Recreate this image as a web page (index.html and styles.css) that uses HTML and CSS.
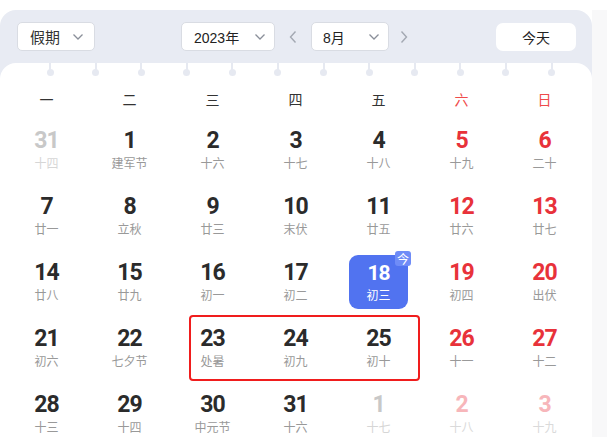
FILE: index.html
```html
<!DOCTYPE html>
<html lang="zh">
<head>
<meta charset="utf-8">
<link rel="stylesheet" href="styles.css">
</head>
<body>
<div class="shell">
  <div class="page">
    <div class="toolbar">
      <div class="select sel-holiday"><span>假期</span><svg class="caret" viewBox="0 0 12 8"><path d="M1.5 1.5 L6 6 L10.5 1.5"/></svg></div>
      <div class="center-group">
        <div class="select sel-year"><span>2023年</span><svg class="caret" viewBox="0 0 12 8"><path d="M1.5 1.5 L6 6 L10.5 1.5"/></svg></div>
        <div class="arrow arrow-prev"><svg viewBox="0 0 8 14"><path d="M6.5 1.5 L1.5 7 L6.5 12.5"/></svg></div>
        <div class="select sel-month"><span>8月</span><svg class="caret" viewBox="0 0 12 8"><path d="M1.5 1.5 L6 6 L10.5 1.5"/></svg></div>
        <div class="arrow arrow-next"><svg viewBox="0 0 8 14"><path d="M1.5 1.5 L6.5 7 L1.5 12.5"/></svg></div>
      </div>
      <div class="today-btn">今天</div>
    </div>
    <div class="card">
      <div class="rings">
        <i></i><i></i><i></i><i></i><i></i><i></i><i></i><i></i><i></i><i></i><i></i><i></i>
      </div>
      <div class="weekdays">
        <div>一</div><div>二</div><div>三</div><div>四</div><div>五</div><div class="wk-red">六</div><div class="wk-red">日</div>
      </div>
      <div class="grid">
        <div class="cell other"><div class="day"><b>31</b><span>十四</span></div></div>
        <div class="cell"><div class="day"><b>1</b><span>建军节</span></div></div>
        <div class="cell"><div class="day"><b>2</b><span>十六</span></div></div>
        <div class="cell"><div class="day"><b>3</b><span>十七</span></div></div>
        <div class="cell"><div class="day"><b>4</b><span>十八</span></div></div>
        <div class="cell red"><div class="day"><b>5</b><span>十九</span></div></div>
        <div class="cell red"><div class="day"><b>6</b><span>二十</span></div></div>

        <div class="cell"><div class="day"><b>7</b><span>廿一</span></div></div>
        <div class="cell"><div class="day"><b>8</b><span>立秋</span></div></div>
        <div class="cell"><div class="day"><b>9</b><span>廿三</span></div></div>
        <div class="cell"><div class="day"><b>10</b><span>末伏</span></div></div>
        <div class="cell"><div class="day"><b>11</b><span>廿五</span></div></div>
        <div class="cell red"><div class="day"><b>12</b><span>廿六</span></div></div>
        <div class="cell red"><div class="day"><b>13</b><span>廿七</span></div></div>

        <div class="cell"><div class="day"><b>14</b><span>廿八</span></div></div>
        <div class="cell"><div class="day"><b>15</b><span>廿九</span></div></div>
        <div class="cell"><div class="day"><b>16</b><span>初一</span></div></div>
        <div class="cell"><div class="day"><b>17</b><span>初二</span></div></div>
        <div class="cell today"><div class="day"><b>18</b><span>初三</span><em class="badge">今</em></div></div>
        <div class="cell red"><div class="day"><b>19</b><span>初四</span></div></div>
        <div class="cell red"><div class="day"><b>20</b><span>出伏</span></div></div>

        <div class="cell"><div class="day"><b>21</b><span>初六</span></div></div>
        <div class="cell"><div class="day"><b>22</b><span>七夕节</span></div></div>
        <div class="cell"><div class="day"><b>23</b><span>处暑</span></div></div>
        <div class="cell"><div class="day"><b>24</b><span>初九</span></div></div>
        <div class="cell"><div class="day"><b>25</b><span>初十</span></div></div>
        <div class="cell red"><div class="day"><b>26</b><span>十一</span></div></div>
        <div class="cell red"><div class="day"><b>27</b><span>十二</span></div></div>

        <div class="cell"><div class="day"><b>28</b><span>十三</span></div></div>
        <div class="cell"><div class="day"><b>29</b><span>十四</span></div></div>
        <div class="cell"><div class="day"><b>30</b><span>中元节</span></div></div>
        <div class="cell"><div class="day"><b>31</b><span>十六</span></div></div>
        <div class="cell other"><div class="day"><b>1</b><span>十七</span></div></div>
        <div class="cell other-red"><div class="day"><b>2</b><span>十八</span></div></div>
        <div class="cell other-red"><div class="day"><b>3</b><span>十九</span></div></div>
      </div>
      <div class="highlight"></div>
    </div>
  </div>
  <div class="gutter"></div>
</div>
</body>
</html>
```

FILE: styles.css
```css
* { box-sizing: border-box; }
html, body { margin: 0; padding: 0; background: #ffffff; }
body {
  font-family: "Liberation Sans", "Noto Sans CJK SC", sans-serif;
  color: #333;
  height: 437px;
  overflow: hidden;
}
.shell {
  display: flex;
  height: 437px;
}
.page {
  width: 592px;
  flex: none;
  margin-top: 10px;
  background: #e8ebf3;
  border-radius: 16px 16px 0 0;
  display: flex;
  flex-direction: column;
}
.gutter {
  flex: 1;
  background: #f8f8f9;
  margin-top: 10px;
}
.toolbar {
  flex: none;
  height: 53px;
  display: flex;
  align-items: center;
  padding: 0 16px 0 17px;
}
.select {
  height: 29px;
  background: #fff;
  border: 1px solid #d9dce3;
  border-radius: 5px;
  display: flex;
  align-items: center;
  justify-content: space-between;
  font-size: 14px;
  color: #222;
}
.caret {
  width: 12px;
  height: 8px;
  fill: none;
  stroke: #8a8f99;
  stroke-width: 1.3;
}
.sel-holiday { width: 78px; padding: 0 10px 0 12px; font-size: 15px; color: #333; }
.center-group {
  display: flex;
  align-items: center;
  margin-left: 86px;
}
.sel-year { width: 94px; padding: 0 8px 0 12px; }
.sel-month { width: 78px; padding: 0 8px 0 11px; }
.arrow {
  height: 29px;
  display: flex;
  align-items: center;
  justify-content: center;
}
.arrow svg {
  width: 8px;
  height: 14px;
  fill: none;
  stroke: #a3a8b2;
  stroke-width: 1.4;
}
.arrow-prev { width: 36px; }
.arrow-next { width: 30px; }
.today-btn {
  margin-left: auto;
  width: 80px;
  height: 28px;
  background: #fff;
  border-radius: 7px;
  display: flex;
  align-items: center;
  justify-content: center;
  font-size: 14px;
  color: #222;
}
.card {
  position: relative;
  flex: none;
  background: #fff;
  border-radius: 16px 16px 0 0;
  padding: 0 6px 0 5px;
}
.rings {
  height: 14px;
  display: flex;
  gap: 38.6px;
  padding-left: 41.5px;
}
.rings i {
  width: 7px;
  height: 13px;
  position: relative;
}
.rings i::before {
  content: "";
  position: absolute;
  left: 2.5px;
  top: 0;
  width: 2px;
  height: 8px;
  background: #e6e9f1;
}
.rings i::after {
  content: "";
  position: absolute;
  left: 0;
  top: 6px;
  width: 7px;
  height: 7px;
  border-radius: 50%;
  background: #e6e9f1;
}
.weekdays {
  display: grid;
  grid-template-columns: repeat(7, 1fr);
  height: 44px;
  align-items: center;
  text-align: center;
  font-size: 14px;
  color: #333;
  font-family: "Noto Sans CJK SC", sans-serif;
}
.weekdays .wk-red { color: #ef4b4b; }
.grid {
  display: grid;
  grid-template-columns: repeat(7, 1fr);
  grid-auto-rows: 66px;
}
.cell {
  display: flex;
  justify-content: center;
}
.day {
  position: relative;
  width: 59px;
  height: 54px;
  margin-top: 2px;
  padding-top: 6px;
  display: flex;
  flex-direction: column;
  align-items: center;
  border-radius: 9px;
}
.day b {
  font-family: "Roboto", "Liberation Sans", sans-serif;
  font-weight: 700;
  font-size: 23px;
  line-height: 24px;
  height: 24px;
  letter-spacing: -1px;
  color: #2b2b2b;
}
.day span {
  font-family: "Noto Sans CJK SC", sans-serif;
  font-size: 12px;
  line-height: 16px;
  margin-top: 2px;
  color: #999;
}
.red .day b { color: #e8323a; }
.other .day b { color: #c8c8c8; }
.other .day span { color: #d6d6d6; }
.other-red .day b { color: #f7b6ba; }
.other-red .day span { color: #dadada; }
.today .day { background: #5173f0; }
.today .day b { color: #fff; font-size: 21px; }
.today .day span { color: #fff; }
.badge {
  position: absolute;
  top: -4px;
  right: -3px;
  width: 16px;
  height: 15px;
  border-radius: 3px;
  background: #6f8cf7;
  color: #fff;
  font-style: normal;
  font-family: "Noto Sans CJK SC", sans-serif;
  font-size: 12px;
  line-height: 15px;
  text-align: center;
}
.highlight {
  position: absolute;
  left: 189px;
  top: 252px;
  width: 231px;
  height: 66px;
  border: 2px solid #f01d1d;
  border-radius: 4px;
}
```
